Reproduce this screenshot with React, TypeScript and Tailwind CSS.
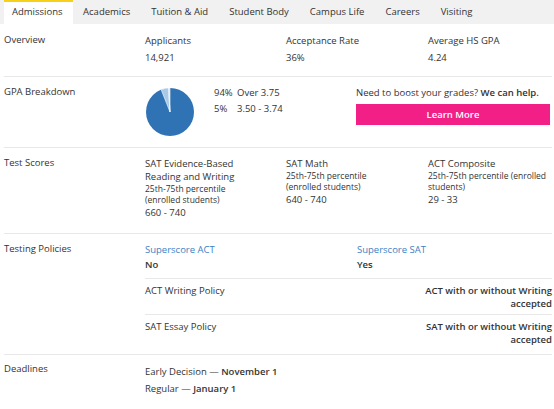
import React from "react";

const tabs = ["Admissions", "Academics", "Tuition & Aid", "Student Body", "Campus Life", "Careers", "Visiting"];

function Pie() {
  return (
    <svg width="48" height="48" viewBox="0 0 48 48" className="block">
      <circle cx="24" cy="24" r="24" fill="#2f73b4" />
      <path d="M24 24 L15.17 1.68 A24 24 0 0 1 22.49 0.05 Z" fill="#a8c9e8" stroke="#ffffff" strokeWidth="0.6" />
      <path d="M24 24 L22.49 0.05 A24 24 0 0 1 24 0 Z" fill="#d4e4f3" stroke="#ffffff" strokeWidth="0.6" />
    </svg>
  );
}

function Label({ children }: { children: React.ReactNode }) {
  return <div className="w-[141px] shrink-0 pt-[8px] font-medium leading-[14px]">{children}</div>;
}

export default function App() {
  return (
    <div className="h-[409px] w-[554px] overflow-hidden bg-white font-['Open_Sans',sans-serif] text-[9.5px] text-[#333]">
      <div className="flex h-[24px] bg-[#f1f1f1] pl-[4px]">
        {tabs.map((tab, i) => (
          <div
            key={tab}
            className={
              i === 0
                ? "flex items-center border-t-2 border-[#f7d117] bg-white pb-[2px] pl-[8px] pr-[10px]"
                : "flex items-center px-[10.5px]"
            }
          >
            {tab}
          </div>
        ))}
      </div>

      <div className="pl-[4px] pr-[2px]">
        {/* overview */}
        <div className="flex border-b border-[#e8e8e8] pb-[10px]">
          <div className="w-[141px] shrink-0 pt-[9px] font-medium leading-[14px]">Overview</div>
          <div className="grid flex-1 grid-cols-[141px_142px_1fr] pt-[9px] leading-[16px]">
            {[
              ["Applicants", "14,921"],
              ["Acceptance Rate", "36%"],
              ["Average HS GPA", "4.24"],
            ].map(([k, v]) => (
              <div key={k}>
                <div className="font-medium">{k}</div>
                <div className="mt-px">{v}</div>
              </div>
            ))}
          </div>
        </div>

        {/* gpa */}
        <div className="flex border-b border-[#e8e8e8] pb-[11px]">
          <div className="w-[141px] shrink-0 pt-[8px] font-medium leading-[14px]">GPA Breakdown</div>
          <div className="flex flex-1 pt-[8px]">
            <div className="ml-px mt-[3px]">
              <Pie />
            </div>
            <div className="ml-[20px] w-[142px] pt-px leading-[14px]">
              <div className="flex">
                <span className="w-[23px]">94%</span>
                <span>Over 3.75</span>
              </div>
              <div className="mt-[2px] flex">
                <span className="w-[23px]">5%</span>
                <span>3.50 - 3.74</span>
              </div>
            </div>
            <div className="flex-1 pt-px leading-[14px]">
              <div>
                Need to boost your grades? <span className="font-semibold">We can help.</span>
              </div>
              <button className="mt-[4px] flex h-[21px] w-[194px] items-center justify-center bg-[#f21f87] font-semibold text-white">
                Learn More
              </button>
            </div>
          </div>
        </div>

        {/* test scores */}
        <div className="flex border-b border-[#e8e8e8] pb-[13px]">
          <Label>Test Scores</Label>
          <div className="grid flex-1 grid-cols-[141px_142px_1fr] pt-[9px]">
            <div>
              <div className="leading-[13px]">SAT Evidence-Based<br />Reading and Writing</div>
              <div className="text-[8.5px] leading-[11px]">25th-75th percentile<br />(enrolled students)</div>
              <div className="mt-px font-medium leading-[14px]">660 - 740</div>
            </div>
            <div>
              <div className="leading-[13px]">SAT Math</div>
              <div className="text-[8.5px] leading-[11px]">25th-75th percentile<br />(enrolled students)</div>
              <div className="mt-px font-medium leading-[14px]">640 - 740</div>
            </div>
            <div>
              <div className="leading-[13px]">ACT Composite</div>
              <div className="text-[8.5px] leading-[11px]">25th-75th percentile (enrolled<br />students)</div>
              <div className="mt-px font-medium leading-[14px]">29 - 33</div>
            </div>
          </div>
        </div>

        {/* testing policies */}
        <div className="flex border-b border-[#e8e8e8]">
          <Label>Testing Policies</Label>
          <div className="flex-1">
            <div className="grid grid-cols-[212px_1fr] border-b border-[#e8e8e8] pb-[6px] pt-[8px] leading-[15px]">
              <div>
                <div className="text-[#3d7fc6]">Superscore ACT</div>
                <div className="font-semibold">No</div>
              </div>
              <div>
                <div className="text-[#3d7fc6]">Superscore SAT</div>
                <div className="font-semibold">Yes</div>
              </div>
            </div>
            <div className="flex justify-between border-b border-[#e8e8e8] pb-[4px] pt-[5px] leading-[13px]">
              <div>ACT Writing Policy</div>
              <div className="text-right font-semibold">ACT with or without Writing<br />accepted</div>
            </div>
            <div className="flex justify-between pb-[8px] pt-[5px] leading-[13px]">
              <div>SAT Essay Policy</div>
              <div className="text-right font-semibold">SAT with or without Writing<br />accepted</div>
            </div>
          </div>
        </div>

        {/* deadlines */}
        <div className="flex">
          <div className="w-[141px] shrink-0 pt-[7px] font-medium leading-[14px]">Deadlines</div>
          <div className="flex-1 pt-[8px] leading-[17px]">
            <div>
              Early Decision — <span className="font-semibold">November 1</span>
            </div>
            <div>
              Regular — <span className="font-semibold">January 1</span>
            </div>
          </div>
        </div>
      </div>
    </div>
  );
}
